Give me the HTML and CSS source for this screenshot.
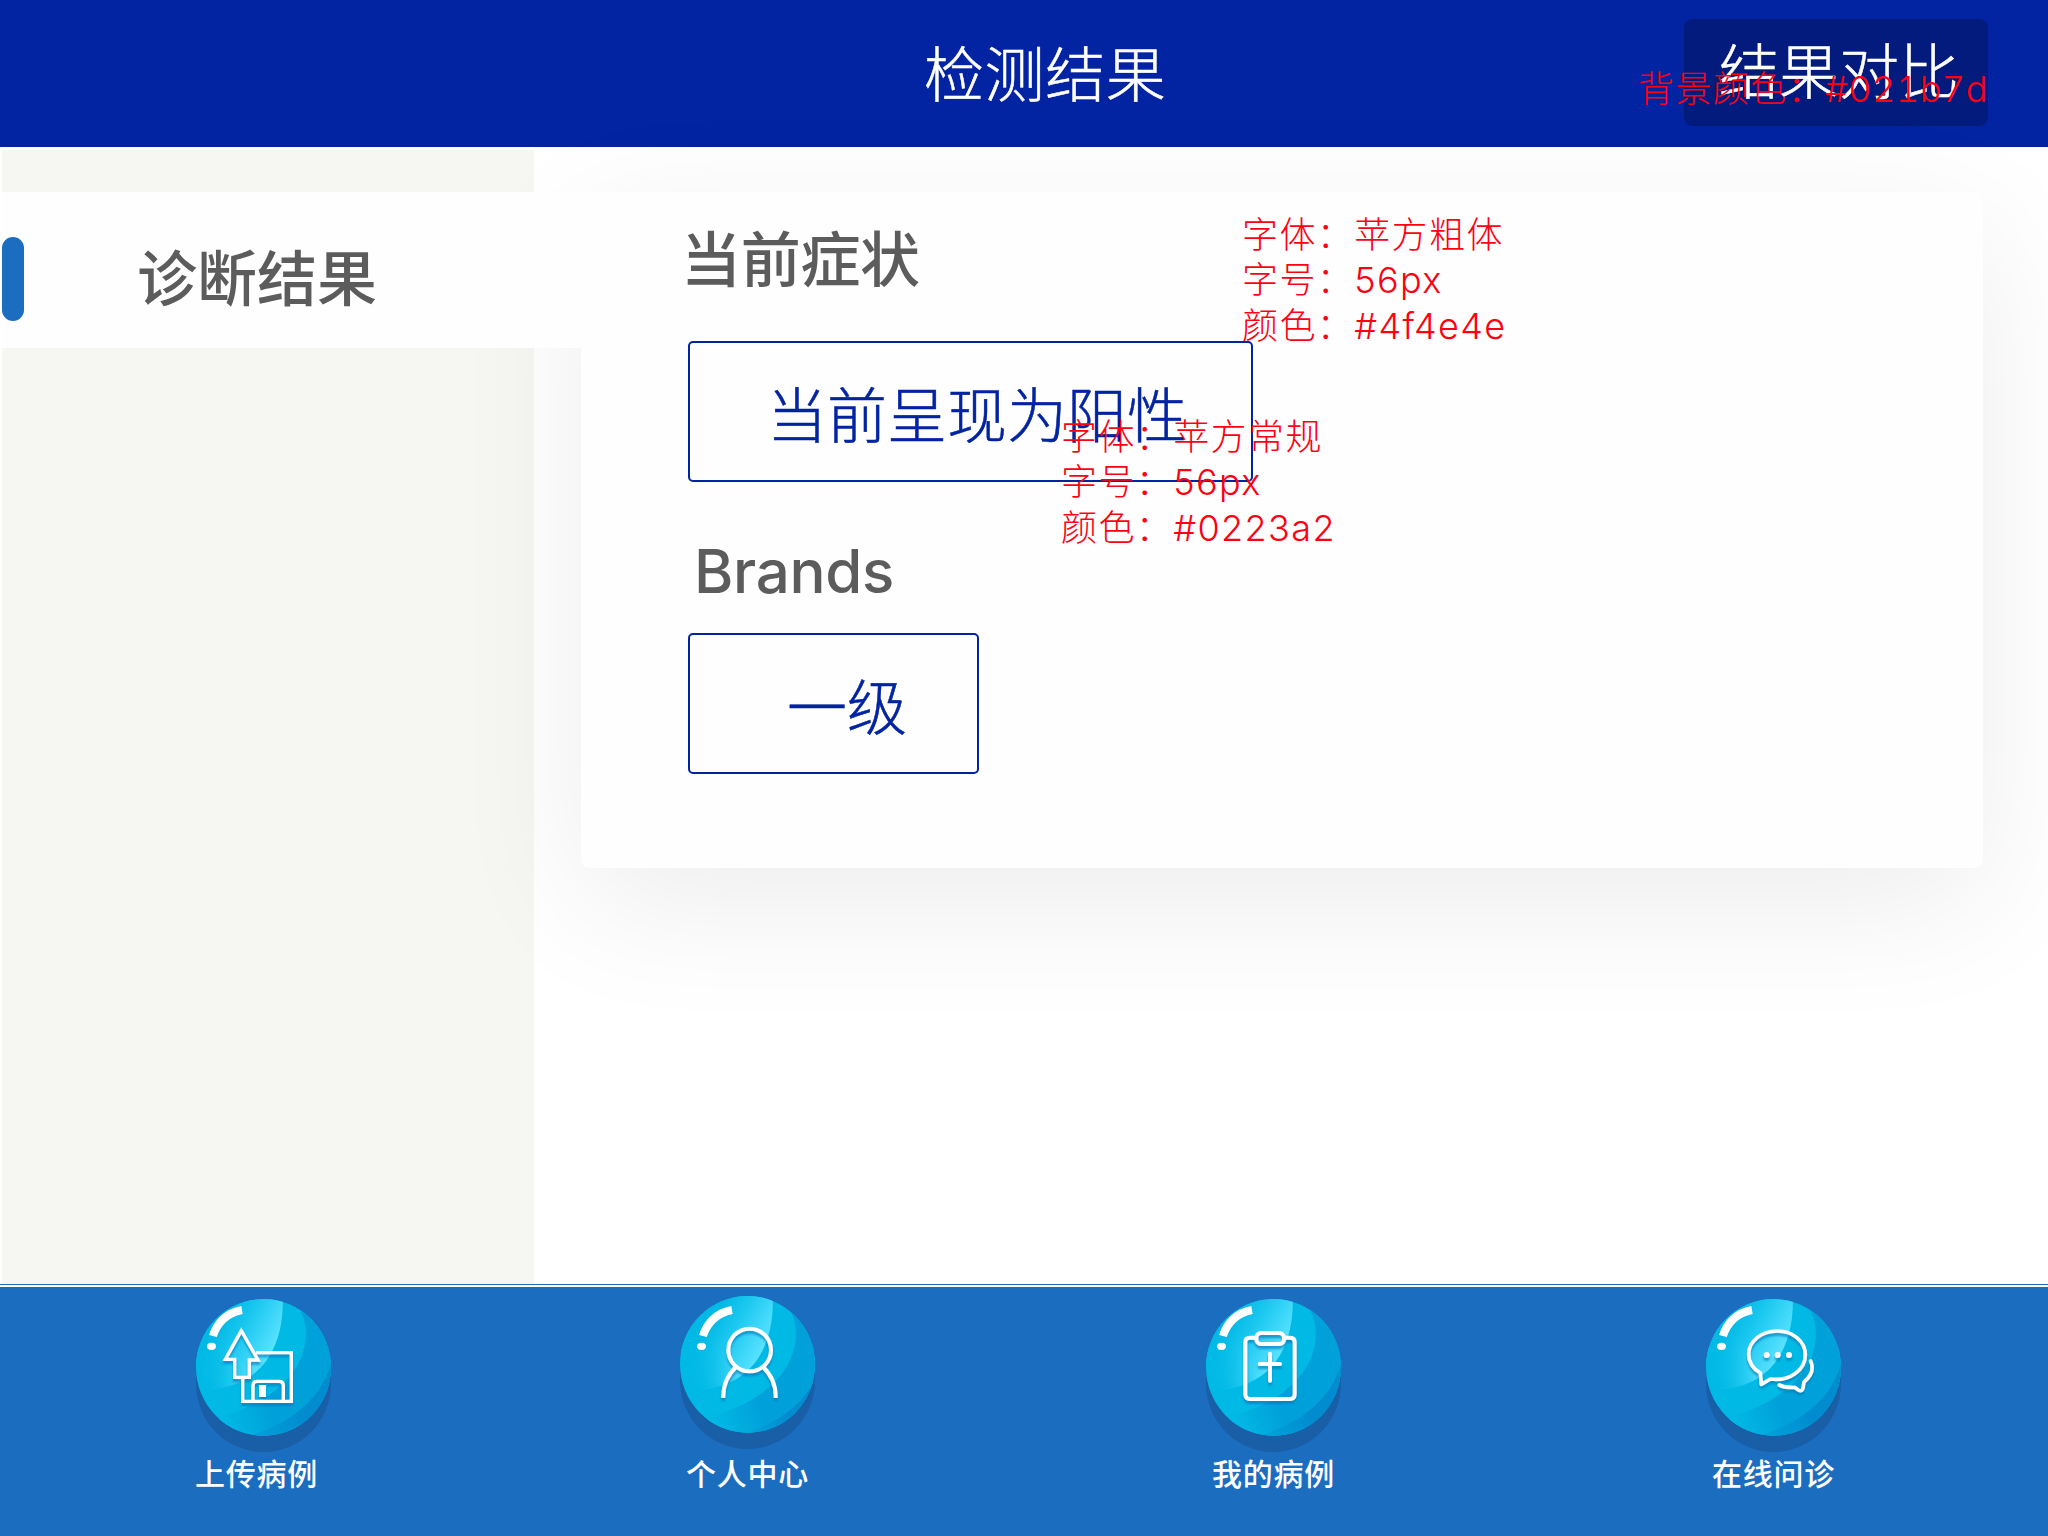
FILE: index.html
```html
<!DOCTYPE html>
<html lang="zh-CN">
<head>
<meta charset="utf-8">
<title>检测结果</title>
<link rel="stylesheet" href="styles.css">
</head>
<body>
<svg class="defs" width="0" height="0" aria-hidden="true">
  <defs>
    <linearGradient id="shine" gradientUnits="userSpaceOnUse" x1="120" y1="130" x2="275" y2="215">
      <stop offset="0" stop-color="#00b9e5"/><stop offset=".4" stop-color="#1cc8f0"/><stop offset="1" stop-color="#58e2ff"/>
    </linearGradient>
    <linearGradient id="fade" gradientUnits="userSpaceOnUse" x1="90" y1="330" x2="190" y2="265">
      <stop offset="0" stop-color="#00b9e5"/><stop offset="1" stop-color="#00b9e5" stop-opacity="0"/>
    </linearGradient>
    <linearGradient id="band" gradientUnits="userSpaceOnUse" x1="130" y1="420" x2="260" y2="370">
      <stop offset="0" stop-color="#00b9e5"/><stop offset="1" stop-color="#00a1da"/>
    </linearGradient>
    <linearGradient id="edge" gradientUnits="userSpaceOnUse" x1="230" y1="460" x2="350" y2="390">
      <stop offset="0" stop-color="#00a1da"/><stop offset="1" stop-color="#008ccf"/>
    </linearGradient>
    <clipPath id="disc"><ellipse cx="250.500" cy="262" rx="202.500" ry="205"/></clipPath>
    <filter id="drop" x="-20%" y="-20%" width="140%" height="150%">
      <feDropShadow dx="0" dy="9" stdDeviation="3" flood-color="#0077b8" flood-opacity=".65"/>
    </filter>
    <g id="facets">
      <path d="M355 80C410 170 375 335 130 408L20 480H480V40Z" fill="url(#band)"/>
      <path d="M455 245C430 340 360 415 220 465L460 480Z" fill="url(#edge)"/>
      <path d="M308 40C316 200 245 322 85 327L20 200L120 40Z" fill="url(#shine)"/>
      <path d="M308 40C316 200 245 322 85 327L20 200L120 40Z" fill="url(#fade)"/>
    </g>
    <g id="glint">
      <path d="M99 168C110 130 140 98 186 90" fill="none" stroke="#fff" stroke-width="24"/>
      <ellipse cx="94.500" cy="199" rx="13.500" ry="11" fill="#fff"/>
    </g>
    <g id="base">
      <ellipse cx="250.500" cy="311" rx="202.500" ry="205" fill="#185fa8"/>
      <ellipse cx="250.500" cy="262" rx="202.500" ry="205" fill="#00b9e5"/>
    </g>
    <g id="ball">
      <use href="#base"/>
      <g clip-path="url(#disc)"><use href="#facets"/></g>
      <use href="#glint"/>
    </g>
  </defs>
</svg>

<header class="header">
  <h1 class="title">检测结果</h1>
  <button class="compare">结果对比</button>
  <p class="note note-bg">背景颜色：<span class="hex">#021b7d</span></p>
</header>

<main class="main">
  <aside class="sidebar">
    <div class="tab"><span class="tab-mark"></span><span class="tab-label">诊断结果</span></div>
  </aside>
  <section class="card">
    <h2 class="heading">当前症状</h2>
    <div class="tag tag-status">当前呈现为阳性</div>
    <h2 class="heading heading-brands">Brands</h2>
    <div class="tag tag-level">一级</div>
    <p class="note note-heading">字体：苹方粗体<br>字号：56px<br>颜色：#4f4e4e</p>
    <p class="note note-tag">字体：苹方常规<br>字号：56px<br>颜色：#0223a2</p>
  </section>
</main>

<nav class="nav">
  <a class="item item-upload">
    <svg class="icon" viewBox="48 57 405 459">
      <use href="#ball"/>
      <g fill="none" stroke="#fff" stroke-width="10" filter="url(#drop)">
        <path d="M228 218H334V364H188V296"/>
        <path d="M184 152L136 238H164V292H208V240H234Z"/>
        <path d="M219 364V316Q219 304 231 304H298Q310 304 310 316V364"/>
        <path d="M237 333H258" stroke-width="36"/>
      </g>
    </svg>
    <span class="label">上传病例</span>
  </a>
  <a class="item item-user">
    <svg class="icon" viewBox="48 57 405 459">
      <use href="#base"/>
      <g clip-path="url(#disc)"><use href="#facets" x="18" y="9"/></g>
      <use href="#glint" x="18" y="9"/>
      <g fill="none" stroke="#fff" stroke-width="12" filter="url(#drop)">
        <circle cx="257" cy="219" r="64"/>
        <path d="M178 363C177 325 187 297 216 270M335 363C336 325 326 297 297 270"/>
      </g>
    </svg>
    <span class="label">个人中心</span>
  </a>
  <a class="item item-cases">
    <svg class="icon" viewBox="48 57 405 459">
      <use href="#ball"/>
      <g fill="none" stroke="#fff" stroke-width="12" stroke-linecap="round" filter="url(#drop)">
        <path d="M199 173H180Q166 173 166 186V343Q166 357 180 357H300Q314 357 314 343V186Q314 173 300 173H282"/>
        <rect x="199" y="159" width="83" height="33" rx="14"/>
        <path d="M209 252H270M240 221V302"/>
      </g>
    </svg>
    <span class="label">我的病例</span>
  </a>
  <a class="item item-consult">
    <svg class="icon" viewBox="48 57 405 459">
      <use href="#ball"/>
      <g fill="none" stroke="#fff" stroke-width="11" stroke-linecap="round" stroke-linejoin="round" filter="url(#drop)">
        <path d="M214 313L211 279C188 266 176 247 176 223C176 183 215 153 262 153C309 153 346 184 346 224C346 271 297 305 241 297Z"/>
        <path d="M362 243C372 266 365 287 342 306L339 324C337 333 332 334 325 330L314 322C295 323 280 321 268 315"/>
        <g fill="#fff" stroke="none"><circle cx="230" cy="225" r="9"/><circle cx="263" cy="225" r="9"/><circle cx="297" cy="225" r="9"/></g>
      </g>
    </svg>
    <span class="label">在线问诊</span>
  </a>
</nav>
</body>
</html>
```
FILE: styles.css
```css
* { box-sizing: border-box; }

body {
  margin: 0;
  width: 2048px;
  height: 1536px;
  overflow: hidden;
  display: flex;
  flex-direction: column;
  background: #fff;
  font-family: "Noto Sans CJK SC", sans-serif;
}

.defs { position: absolute; }

h1, h2, p { margin: 0; font-weight: 300; }

.header {
  position: relative;
  height: 147px;
  flex: none;
  display: grid;
  grid-template-columns: 1fr auto 364px;
  align-items: center;
  background: #0223a2;
  color: #fff;
}

.title {
  grid-column: 2;
  width: 760px;
  padding-bottom: 6px;
  font-size: 60px;
  line-height: 80px;
  letter-spacing: .6px;
  -webkit-text-stroke: .5px currentColor;
}

.compare {
  width: 304px;
  height: 107px;
  padding: 0 0 9px 6px;
  margin-bottom: 2px;
  border: 0;
  border-radius: 9px;
  background: #021b7d;
  color: #fff;
  font: 300 60px/80px "Noto Sans CJK SC", sans-serif;
  -webkit-text-stroke: .5px currentColor;
}

.note {
  position: absolute;
  z-index: 2;
  color: #ff0013;
  font: 300 36px/45.3px Inter, "Noto Sans CJK SC", sans-serif;
  letter-spacing: 1.4px;
  white-space: nowrap;
}

.note-bg { left: 1638px; top: 67px; }
.note-heading { left: 661px; top: 21px; }
.note-tag { left: 480px; top: 223px; }

.hex { font-variant-numeric: tabular-nums; letter-spacing: .5px; }

.main {
  flex: none;
  height: 1137px;
  display: flex;
  align-items: flex-start;
  padding: 3px 0 0 2px;
}

.sidebar {
  width: 532px;
  height: 1134px;
  padding-top: 42px;
  background: #f6f7f2;
}

.tab {
  position: relative;
  z-index: 1;
  width: 580px;
  height: 156px;
  display: flex;
  align-items: center;
  background: #fefefe;
}

.tab-mark {
  width: 22px;
  height: 84px;
  margin-top: 18px;
  border-radius: 11px;
  background: #1b6dc0;
}

.tab-label {
  margin: 10px 0 0 113px;
  color: #5c5c5c;
  font-size: 60px;
  font-weight: 500;
  line-height: 80px;
}

.card {
  position: relative;
  width: 1402px;
  height: 676px;
  margin: 42px 0 0 47px;
  padding: 24px 0 0 107px;
  border-radius: 8px;
  background: #fefefe;
  box-shadow: 0 36px 136px rgba(0, 0, 0, .075);
}

.heading {
  margin-left: -7px;
  height: 80px;
  color: #5c5c5c;
  font-size: 60px;
  font-weight: 500;
  line-height: 80px;
  letter-spacing: -.3px;
}

.heading-brands {
  margin: 49px 0 0 6px;
  font-family: Inter, sans-serif;
}

.tag {
  height: 141px;
  border: 2px solid #0223a2;
  border-radius: 5px;
  color: #0223a2;
  font-size: 60px;
  font-weight: 300;
  line-height: 137px;
  -webkit-text-stroke: .5px currentColor;
}

.tag-status { width: 565px; margin-top: 45px; padding-left: 77px; }
.tag-level { width: 291px; margin-top: 22px; padding-left: 97px; }

.nav {
  flex: none;
  height: 252px;
  display: flex;
  align-items: flex-start;
  border-top: 1px solid #1b6dc0;
  background: linear-gradient(#fff 2px, #1b6dc0 2px);
}

.item {
  width: 135px;
  display: flex;
  flex-direction: column;
  align-items: center;
}

.icon { display: block; width: 135px; height: 153px; }

.label {
  height: 44px;
  margin-top: -2px;
  color: #fff;
  font-size: 30px;
  font-weight: 500;
  line-height: 44px;
  letter-spacing: .7px;
  white-space: nowrap;
}

.item-upload { margin: 14px 0 0 196px; }
.item-upload .label { margin-left: -14px; }
.item-user { margin: 11px 0 0 349px; }
.item-user .label { margin-top: 1px; }
.item-cases { margin: 14px 0 0 391px; }
.item-consult { margin: 14px 0 0 365px; }
```
